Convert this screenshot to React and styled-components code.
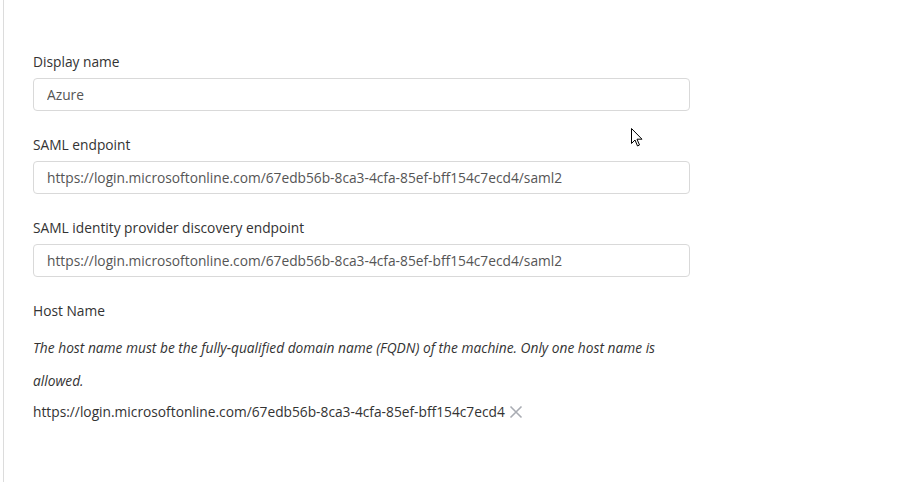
import styled, { createGlobalStyle } from 'styled-components'

const Global = createGlobalStyle`
  html, body {
    margin: 0;
    background: #fff;
    font-family: "Open Sans", "Liberation Sans", sans-serif;
  }
`

const Page = styled.div`
  position: relative;
  height: 482px;
  overflow: hidden;
  margin-left: 3px;
  border-left: 1px solid #dcdcdc;
  padding: 52px 0 0 29px;
  box-sizing: border-box;
`

const Form = styled.div`
  width: 657px;
  display: flex;
  flex-direction: column;
  gap: 24px;
`

const Field = styled.div`
  display: flex;
  flex-direction: column;
`

const Label = styled.label`
  font-size: 13.75px;
  line-height: 20px;
  color: #333;
  margin-bottom: ${props => props.tight ? '10px' : '6px'};
`

const Input = styled.input`
  height: 33px;
  box-sizing: border-box;
  border: 1px solid #d9d9d9;
  border-radius: 4px;
  padding: 0 13px;
  font-family: inherit;
  font-size: 13.75px;
  color: #555;
  background: #fff;
  outline: none;
`

const Hint = styled.p`
  margin: 0;
  font-size: 13.75px;
  line-height: 33px;
  font-style: italic;
  color: #333;
`

const HostRow = styled.div`
  display: flex;
  align-items: center;
  gap: 3px;
  margin-top: 5px;
  font-size: 13.75px;
  line-height: 20px;
  color: #333;
`

const Remove = styled.button`
  display: flex;
  align-items: center;
  padding: 0;
  border: none;
  background: none;
  color: #a9acb3;
  cursor: pointer;
`

const Cursor = styled.svg`
  position: absolute;
  left: 627px;
  top: 128px;
`

const url = 'https://login.microsoftonline.com/67edb56b-8ca3-4cfa-85ef-bff154c7ecd4/saml2'

const App = () => (
  <>
    <Global />
    <Page>
      <Form>
        <Field>
          <Label>Display name</Label>
          <Input defaultValue="Azure" />
        </Field>
        <Field>
          <Label>SAML endpoint</Label>
          <Input defaultValue={url} />
        </Field>
        <Field>
          <Label>SAML identity provider discovery endpoint</Label>
          <Input defaultValue={url} />
        </Field>
        <Field>
          <Label tight>Host Name</Label>
          <Hint>
            The host name must be the fully-qualified domain name (FQDN) of the machine. Only one host name is allowed.
          </Hint>
          <HostRow>
            https://login.microsoftonline.com/67edb56b-8ca3-4cfa-85ef-bff154c7ecd4
            <Remove>
              <svg width="16" height="16" viewBox="0 0 16 16">
                <path d="M2.5 2.5 L13.5 13.5 M13.5 2.5 L2.5 13.5" stroke="currentColor" strokeWidth="1.6" />
              </svg>
            </Remove>
          </HostRow>
        </Field>
      </Form>
      <Cursor width="12" height="19" viewBox="0 0 12 19">
        <path d="M0.5 0.5 L0.5 15.5 L4 12 L6.5 18 L8.5 17 L6 11.2 L11 11.2 Z" fill="#fff" stroke="#000" strokeWidth="1" strokeLinejoin="round" />
      </Cursor>
    </Page>
  </>
)

export default App
